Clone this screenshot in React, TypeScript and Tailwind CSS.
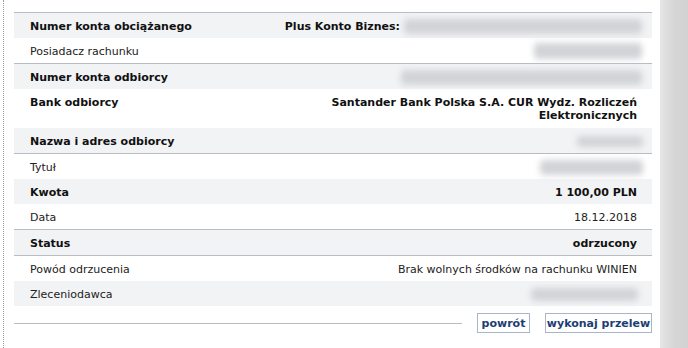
import React from "react";

const Blur = ({ w, h = 14 }: { w: number; h?: number }) => (
  <div className="rounded-sm bg-[#d2d3d6] blur-[3px]" style={{ width: w, height: h }} />
);

type RowProps = {
  label: string;
  bold?: boolean;
  gray?: boolean;
  border?: boolean;
  children?: React.ReactNode;
  tall?: boolean;
};

const Row = ({ label, bold, gray, border, children, tall }: RowProps) => (
  <div
    className={
      "flex justify-between pl-[16px] pr-[15px] " +
      (tall
        ? "h-[39px] items-start pt-[7px] "
        : border
        ? "h-[26px] items-center pt-px "
        : "h-[25px] items-center pt-px ") +
      (gray ? "bg-[#f2f3f5] " : "bg-white ") +
      (border ? "border-b border-[#b9bcc2] " : "")
    }
  >
    <span className={bold ? "font-bold text-[#111]" : "text-[#222]"}>{label}</span>
    {children}
  </div>
);

export default function App() {
  return (
    <div
      className="flex h-[348px] w-[688px] overflow-hidden bg-white text-[11px] leading-[13px]"
      style={{ fontFamily: '"DejaVu Sans", Verdana, sans-serif' }}
    >
      <div className="ml-[3px] h-full border-l border-dotted border-[#9a9a9a]" />
      <div className="ml-[10px] w-[638px] pt-[12px]">
        <div className="border-t border-[#b9bcc2]">
          <Row label="Numer konta obciążanego" bold gray>
            <div className="flex items-center gap-[4px]">
              <span className="font-bold text-[#111]">Plus Konto Biznes:</span>
              <div className="mr-[-5px]">
                <Blur w={238} h={15} />
              </div>
            </div>
          </Row>
          <Row label="Posiadacz rachunku" border>
            <div className="mr-[-5px]">
              <Blur w={108} h={16} />
            </div>
          </Row>
          <Row label="Numer konta odbiorcy" bold gray>
            <div className="mr-[-5px]">
              <Blur w={241} h={15} />
            </div>
          </Row>
          <Row label="Bank odbiorcy" bold tall>
            <span className="text-right font-bold text-[#111]">
              Santander Bank Polska S.A. CUR Wydz. Rozliczeń
              <br />
              Elektronicznych
            </span>
          </Row>
          <Row label="Nazwa i adres odbiorcy" bold gray border>
            <div className="mr-[-6px]">
              <Blur w={66} h={11} />
            </div>
          </Row>
          <Row label="Tytuł">
            <div className="mr-[-6px]">
              <Blur w={103} h={15} />
            </div>
          </Row>
          <Row label="Kwota" bold gray>
            <span className="font-bold text-[#111]">1 100,00 PLN</span>
          </Row>
          <Row label="Data" border>
            <span className="text-[#222]">18.12.2018</span>
          </Row>
          <Row label="Status" bold gray border>
            <span className="font-bold text-[#111]">odrzucony</span>
          </Row>
          <Row label="Powód odrzucenia">
            <span className="text-[#222]">Brak wolnych środków na rachunku WINIEN</span>
          </Row>
          <Row label="Zleceniodawca" gray>
            <div className="mr-[-1px]">
              <Blur w={107} h={13} />
            </div>
          </Row>
        </div>
        <div className="mt-[7px] flex items-center">
          <div className="mt-[10px] h-px w-[448px] self-start bg-[#b9bcc2]" />
          <div className="ml-auto flex gap-[15px]">
            <button className="h-[20px] w-[53px] border border-[#a9b6c9] bg-white font-bold text-[#1d3e73]">
              powrót
            </button>
            <button className="h-[20px] w-[107px] border border-[#a9b6c9] bg-white font-bold text-[#1d3e73]">
              wykonaj przelew
            </button>
          </div>
        </div>
      </div>
      <div className="w-[8px]" />
      <div className="h-full w-[28px] bg-gradient-to-r from-[#e6e6e6] via-[#d6d6d6] to-[#d2d2d2]" />
    </div>
  );
}
